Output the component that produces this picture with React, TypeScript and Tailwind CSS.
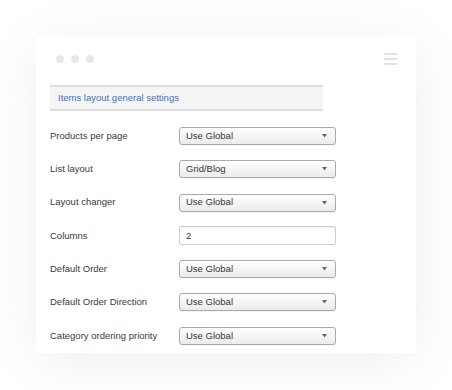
import React from "react";

const rows: { label: string; value: string; input?: boolean }[] = [
  { label: "Products per page", value: "Use Global" },
  { label: "List layout", value: "Grid/Blog" },
  { label: "Layout changer", value: "Use Global" },
  { label: "Columns", value: "2", input: true },
  { label: "Default Order", value: "Use Global" },
  { label: "Default Order Direction", value: "Use Global" },
  { label: "Category ordering priority", value: "Use Global" },
];

export default function App() {
  return (
    <div
      className="w-[452px] h-[390px] bg-white pt-[36px] pl-[36px] overflow-hidden"
      style={{ fontFamily: '"Liberation Sans", Arial, sans-serif' }}
    >
      <div className="w-[380px] h-[317px] bg-white shadow-[0_8px_55px_rgba(0,0,0,0.065)] flex flex-col">
        <div className="flex items-center justify-between h-[46px] pl-[20px] pr-[19px]">
          <div className="flex gap-[7px]">
            <span className="w-[8px] h-[8px] rounded-full bg-[#e8e8e8]" />
            <span className="w-[8px] h-[8px] rounded-full bg-[#e8e8e8]" />
            <span className="w-[8px] h-[8px] rounded-full bg-[#e8e8e8]" />
          </div>
          <div className="flex flex-col gap-[3px] w-[13px]">
            <span className="h-[2px] bg-[#e2e2e2]" />
            <span className="h-[2px] bg-[#e2e2e2]" />
            <span className="h-[2px] bg-[#e2e2e2]" />
          </div>
        </div>
        <div className="ml-[14px] mt-[3px] w-[273px] h-[26px] bg-[#f5f5f5] border-y-2 border-[#dcdcdc] flex items-center pl-[8px]">
          <span className="text-[9.5px] text-[#4173c4]">Items layout general settings</span>
        </div>
        <div className="flex flex-col gap-[15.3px] mt-[16px] pl-[14px]">
          {rows.map((r) => (
            <div key={r.label} className="flex items-center h-[18px]">
              <span className="w-[129px] text-[9.5px] text-[#3a3a3a]">{r.label}</span>
              {r.input ? (
                <div className="w-[157px] h-[19px] border border-[#cfcfcf] rounded-[2px] bg-white flex items-center pl-[6px] text-[9.5px] text-[#333] shadow-[inset_0_1px_1px_rgba(0,0,0,0.06)]">
                  {r.value}
                </div>
              ) : (
                <div className="w-[157px] h-[18px] border border-[#a9a9a9] rounded-[3px] bg-gradient-to-b from-white to-[#ebebeb] flex items-center justify-between pl-[6px] pr-[8px] text-[9.5px] text-[#333] shadow-[0_1px_1px_rgba(0,0,0,0.05)]">
                  <span>{r.value}</span>
                  <svg width="5" height="4" viewBox="0 0 5 4">
                    <path d="M0 0 L5 0 L2.5 3.5 Z" fill="#666" />
                  </svg>
                </div>
              )}
            </div>
          ))}
        </div>
      </div>
    </div>
  );
}
